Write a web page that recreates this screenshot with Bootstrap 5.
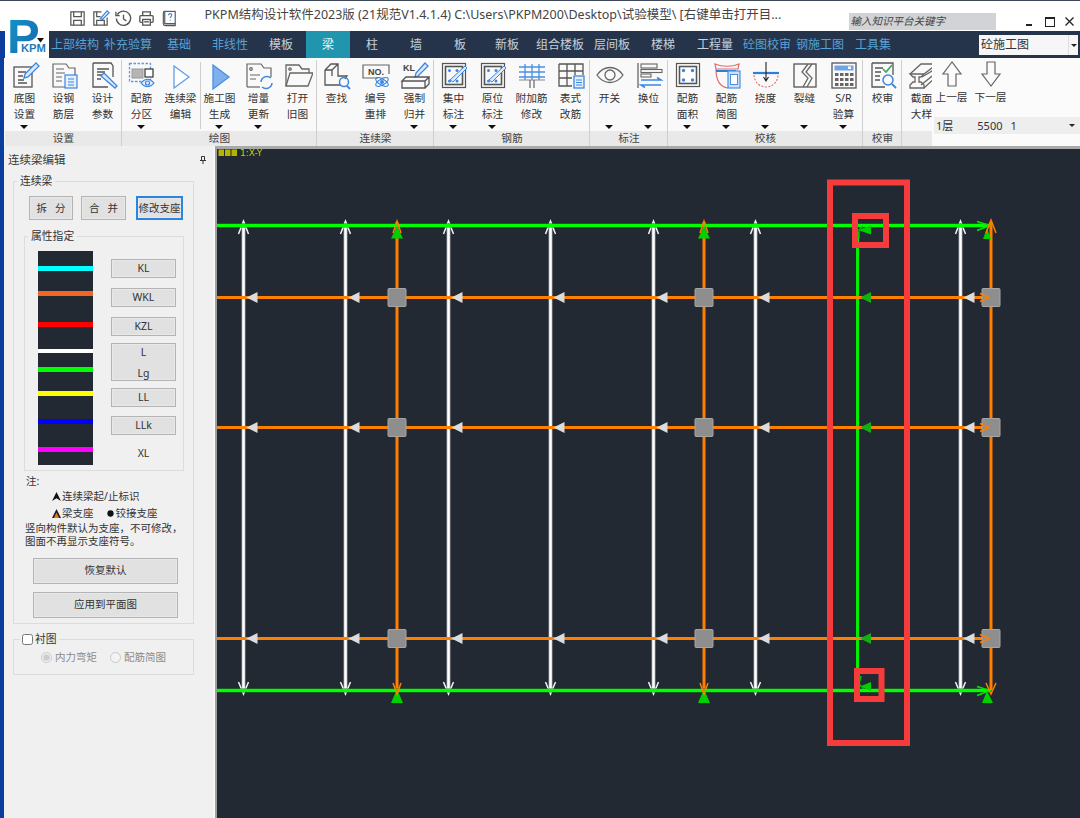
<!DOCTYPE html>
<html lang="zh-CN">
<head>
  <meta charset="UTF-8">
  <title>PKPM结构设计软件2023版</title>
  <link href="https://cdn.jsdelivr.net/npm/bootstrap@5.3.3/dist/css/bootstrap.min.css" rel="stylesheet">
  <style>
    html, body { margin: 0; height: 818px; overflow: hidden; }
    body { background: #fff; color: #333; font-family: "Noto Sans", "Noto Sans CJK SC", sans-serif; font-size: 10.5px; line-height: 15px; }
    .app { width: 1080px; height: 818px; background: linear-gradient(#fff 14px, #0b3d9e 14px); }
    .main { width: 1076px; margin-left: 4px; height: 818px; }

    .titlebar { height: 31px; background: #fff; border-top: 1px solid #3b4657; margin-left: -4px; padding-left: 4px; }
    .qat { margin-left: 64px; width: 137px; gap: 4px; }
    .qat svg { width: 19px; height: 19px; }
    .doc-title { width: 590px; font-size: 12.5px; color: #444; white-space: nowrap; padding-bottom: 3px; }
    .search-box { width: 148px; height: 17px; margin-left: 56px; margin-top: 12px; background: #d2d3d6; color: #444; font-style: italic; font-size: 10.5px; line-height: 17px; padding-left: 2px; }
    .win-btns { margin-left: 24px; margin-top: 12px; }
    .win-btns svg { width: 20px; height: 20px; }
    .logo { position: absolute; left: 5px; top: 14px; width: 44px; height: 44px; background: #fff; }
    .logo svg { display: block; width: 44px; height: 44px; }

    .tabs { height: 27px; background: #25344a; margin-left: 44px; }
    .tab { text-align: center; font-size: 12px; line-height: 27px; color: #c6d0da; white-space: nowrap; }
    .tab.blue { color: #57a2d6; }
    .tab.active { background: #2295ae; color: #e9f6f8; }
    .t44 { width: 44px; } .t48 { width: 48px; } .t50 { width: 50px; } .t52 { width: 52px; } .t54 { width: 54px; } .t56 { width: 56px; }
    .view-select { width: 99px; height: 20px; margin-left: 79px; margin-top: 4px; background: #f6f6f6; color: #333; font-size: 12px; line-height: 20px; padding-left: 2px; }
    .view-select i { width: 10px; border-left: 1px solid #ddd; }

    .ribbon { height: 88px; background: #f9f9f9; }
    .rgroups { width: 928px; padding-left: 1px; overflow: hidden; }
    .rgroup { flex: none; position: relative; }
    .rgroup::after { content: ""; position: absolute; right: 0; top: 2px; bottom: 0; width: 1px; background: #cfcfcf; }
    .rgroup.last::after { display: none; }
    .ritem { flex: none; width: 39px; height: 73px; text-align: center; padding-top: 2px; font-size: 10.7px; line-height: 15.5px; color: #333; white-space: nowrap; position: relative; }
    .ritem svg { display: block; width: 30px; height: 30px; margin: 0 auto 1px; }
    .caret-down { width: 0; height: 0; border-left: 4px solid transparent; border-right: 4px solid transparent; border-top: 4px solid #111; position: absolute; left: 15px; top: 67px; }
    .sep { border-left: 1px solid #cfcfcf; height: 67px; margin-right: -1px; }
    .rlabel { height: 15px; background: #e9e9e9; text-align: center; font-size: 10.7px; line-height: 14px; color: #444; }
    .floor-panel { width: 148px; background: #fbfbfb; }
    .floor-btn { width: 39px; text-align: center; font-size: 10.7px; line-height: 15px; color: #333; }
    .floor-btn svg { display: block; width: 30px; height: 30px; margin: 1px auto 1px; }
    .floor-row { height: 17px; margin-top: 12px; margin-left: 2px; background: #eeeeee; font-size: 11px; line-height: 17px; color: #333; padding: 0 5px 0 2px; }
    .mini-caret { width: 0; height: 0; border-left: 3px solid transparent; border-right: 3px solid transparent; border-top: 3px solid #222; }

    .work { height: 672px; }
    .side { width: 211px; background: #f0f0f0; border-right: 2px solid #f7f7f7; flex: none; }
    .side-title { height: 27px; padding: 0 7px 0 4px; font-size: 11.5px; line-height: 15px; color: #3a3a3a; }
    fieldset.grp { border: 1px solid #dcdcdc; padding: 0; margin: 0; min-width: 0; }
    fieldset.grp > legend { float: none; width: auto; padding: 0 3px; font-size: 10.8px; line-height: 16px; color: #333; margin-bottom: 0; }
    .grp-main { width: 181px; margin-left: 9px !important; height: 451px; padding: 7px 0 0 15px !important; }
    fieldset.grp-main > legend { margin-left: -12px; }
    .grp-attr { width: 160px; margin: 8px 0 0 -5px !important; height: 243px; padding: 7px 0 0 13px !important; }
    fieldset.grp-attr > legend { margin-left: -10px; }
    .wbtn { display: block; padding: 0; border-radius: 0; background: #e1e1e1; border: 1px solid #b4b4b4; color: #333; font-size: 10.5px; line-height: 15px; text-align: center; box-shadow: inset 0 0 0 1px #e8e8e8; }
    .wbtn:hover { background: #e1e1e1; color: #333; border-color: #b4b4b4; }
    .w44 { width: 44px; height: 24px; } .w45 { width: 45px; height: 24px; }
    .w47 { width: 47px; height: 24px; margin-left: 10px; border: 2px solid #2a86dc; }
    .wide { width: 145px; height: 26px; margin-left: 4px; }
    .wide.first { margin-top: 10px; }
    .swatch { display: block; width: 55px; height: 214px; }
    .attr-col { width: 65px; margin-left: 18px; padding-top: 8px; }
    .attr-col .wbtn { width: 65px; height: 19px; margin-bottom: 10px; }
    .attr-col .tall { height: 38px; margin-top: -3px; margin-bottom: 7px; padding: 0; line-height: 22px; }
    .attr-col .tall span { display: block; height: 17px; line-height: 17px; }
    .attr-col .tall span + span { margin-top: 4px; }
    .attr-col .ll { margin-bottom: 9px; }
    .attr-col .xl { text-align: center; line-height: 16px; margin-top: 2px; }
    .notes { margin-left: -3px; margin-top: 2px; line-height: 16px; color: #333; }
    .notes .leg { height: 16px; padding-left: 26px; }
    .notes .leg.up { margin-top: -1px; margin-bottom: 1px; }
    .notes .leg svg { width: 9px; height: 9px; margin-right: 1px; }
    .notes .leg svg.dot { margin-left: 12px; }
    .notes p { margin: 1px 0 0 -1px; line-height: 12.8px; }
    .grp-bg { width: 181px; margin: 7px 0 0 9px !important; height: 44px; padding: 3px 0 0 27px !important; color: #8c8c8c; }
    fieldset.grp-bg > legend { margin-left: -21px; padding: 0 2px; }
    .grp-bg input { margin: 0; width: 11px; height: 11px; accent-color: #8c8c8c; }
    .grp-bg .r1 { margin: 0 13px 0 3px; }
    .grp-bg .r2 { margin-left: 3px; }
    .grp-bg legend input { vertical-align: -2px; margin-right: 2px; accent-color: #fff; }

    .canvas { width: 865px; background: #222932; border-top: 3px solid #a9a9a9; border-left: 2px solid #a0a0a0; flex: none; }
    .canvas svg { display: block; width: 863px; height: 669px; }
    .canvas text { font-family: "DejaVu Sans", "Noto Sans CJK SC", sans-serif; font-size: 9px; fill: #c9c900; }
  </style>
</head>
<body>
<svg width="0" height="0" class="position-absolute">
  <defs>
    <linearGradient id="logoGrad" x1="0" y1="0" x2="1" y2="1"><stop offset="0" stop-color="#0f9ac4"/><stop offset="1" stop-color="#1c62b0"/></linearGradient>
  </defs>
  <symbol id="pen" viewBox="0 0 30 30"><path d="M13 19l1-4L25 4l3 3L17 18z" fill="#dce9fa" stroke="#3b86e0" stroke-width="1.3"/></symbol>
  <symbol id="bars" viewBox="0 0 30 30"><rect x="3.500" y="3.500" width="23" height="23" fill="#fff" stroke="#555" stroke-width="1.200"/><rect x="6.500" y="6.500" width="17" height="17" fill="none" stroke="#555" stroke-width="1.600"/><circle cx="10.500" cy="10.500" r="1.700" fill="#3b86e0"/><circle cx="19.500" cy="10.500" r="1.700" fill="#3b86e0"/><circle cx="10.500" cy="20" r="1.700" fill="#3b86e0"/><circle cx="19.500" cy="20" r="1.700" fill="#3b86e0"/></symbol>
</svg>
<div class="app position-relative">
  <div class="main">
    <div class="titlebar d-flex align-items-start">
      <div class="qat d-flex align-items-center mt-1 pt-1">
        <svg viewBox="0 0 20 20" fill="none" stroke="#555" stroke-width="1.3"><rect x="3" y="3" width="14" height="14"/><path d="M6 3v5h8V3M6 17v-5h8v5"/></svg>
        <svg viewBox="0 0 20 20" fill="none" stroke="#555" stroke-width="1.3"><path d="M11 3H3v14h14V9"/><path d="M6 3v5h4M6 17v-5h8v5"/><path d="M10 10l7-8 2 2-7 7z" stroke="#3b86e0"/></svg>
        <svg viewBox="0 0 20 20" fill="none" stroke="#555" stroke-width="1.4"><path d="M3.500 6A7.500 7.500 0 1 1 2.500 10"/><path d="M2 3v4h4M10 6v4.500l3 2"/></svg>
        <svg viewBox="0 0 20 20" fill="none" stroke="#555" stroke-width="1.4"><path d="M6 7V3h8v4"/><rect x="3" y="7" width="14" height="7" rx="1"/><rect x="6" y="11" width="8" height="6" fill="#fff"/><path d="M7.500 13.500h5"/></svg>
        <svg viewBox="0 0 20 20" fill="none" stroke="#555" stroke-width="1.2"><rect x="5" y="2.500" width="11" height="13"/><path d="M5 2.500c-1 0-1.500 1-1.500 2v11c0 1.500 1 2 2 2H16v-2H5.500"/><path d="M9 6.500c0-2.200 3.300-2.200 3.300 0 0 1.500-1.600 1.500-1.600 3M10.700 11v1" stroke="#3b86e0"/></svg>
      </div>
      <div class="doc-title align-self-center">PKPM结构设计软件2023版 (21规范V1.4.1.4) C:\Users\PKPM200\Desktop\试验模型\ [右键单击打开目...</div>
      <div class="search-box">输入知识平台关键字</div>
      <div class="win-btns d-flex">
        <svg viewBox="0 0 20 20"><rect x="6" y="11" width="6" height="2" fill="#222"/></svg>
        <svg viewBox="0 0 20 20" fill="none" stroke="#222"><rect x="5.500" y="4.500" width="9" height="9" stroke-width="1"/><path d="M5 5h10" stroke-width="2"/></svg>
        <svg viewBox="0 0 20 20" fill="none" stroke="#222" stroke-width="1.300"><path d="M5.500 4.500l8 8M13.500 4.500l-8 8"/></svg>
      </div>
    </div>

    <div class="tabs d-flex">
      <div class="tab blue t54">上部结构</div>
      <div class="tab blue t52">补充验算</div>
      <div class="tab blue t50">基础</div>
      <div class="tab blue t52">非线性</div>
      <div class="tab t50">模板</div>
      <div class="tab active t44">梁</div>
      <div class="tab t44">柱</div>
      <div class="tab t44">墙</div>
      <div class="tab t44">板</div>
      <div class="tab t50">新板</div>
      <div class="tab t56">组合楼板</div>
      <div class="tab t48">层间板</div>
      <div class="tab t54">楼梯</div>
      <div class="tab t50">工程量</div>
      <div class="tab blue t54">砼图校审</div>
      <div class="tab blue t52">钢施工图</div>
      <div class="tab blue t54">工具集</div>
      <div class="view-select d-flex justify-content-between">砼施工图<i class="d-flex align-items-center justify-content-center"><span class="mini-caret"></span></i></div>
    </div>

    <div class="ribbon d-flex">
      <div class="rgroups d-flex">
        <div class="rgroup">
          <div class="d-flex">
            <div class="ritem"><svg viewBox="0 0 30 30" fill="none" stroke="#555" stroke-width="1.3"><rect x="4" y="7" width="18" height="20"/><path d="M8 12h8M8 16h5M8 20h6M8 23h9"/><use href="#pen" x="1" y="-1" width="30" height="30"/></svg>底图<br>设置<span class="caret-down"></span></div>
            <div class="ritem"><svg viewBox="0 0 30 30" fill="none" stroke="#666" stroke-width="1.200"><path d="M4 4h13l3 4h6v19H4z"/><path d="M7 9h8M7 13h9M7 17h6M7 21h6"/><rect x="16" y="15" width="12" height="13" fill="#e6f0fb" stroke="#3b86e0"/><path d="M19 19h6M19 22h6M19 25h6" stroke="#3b86e0"/></svg>设钢<br>筋层</div>
            <div class="ritem"><svg viewBox="0 0 30 30" fill="none" stroke="#555" stroke-width="1.300"><path d="M5 3h18l2 3v11M5 3v24h15"/><path d="M9 9h12M9 12h8M9 15h5M9 19h4"/><path d="M13 16l3-3 13 13-2 2z" fill="#dce9fa" stroke="#3b86e0"/></svg>设计<br>参数</div>
          </div>
          <div class="rlabel">设置</div>
        </div>
        <div class="rgroup">
          <div class="d-flex">
            <div class="ritem"><svg viewBox="0 0 30 30" fill="none"><rect x="2.500" y="3.500" width="21" height="18" stroke="#5a9be6" stroke-width="1.300" stroke-dasharray="2.500 1.500"/><rect x="5" y="9" width="11" height="9" fill="#b5b5b5" stroke="#999"/><rect x="18" y="9" width="8" height="8" fill="#fff" stroke="#333" stroke-width="1.200"/><path d="M14 23c4-5 9-5 13 0-4 5-9 5-13 0z" fill="#e4effb" stroke="#3b86e0" stroke-width="1.200"/><circle cx="20.500" cy="23" r="2" stroke="#3b86e0" stroke-width="1.200"/></svg>配筋<br>分区<span class="caret-down"></span></div>
            <div class="ritem"><svg viewBox="0 0 30 30" fill="none"><path d="M8 6l15 11L8 28z" fill="#fff" stroke="#5f9fe8" stroke-width="1.300"/></svg>连续梁<br>编辑</div>
            <div class="sep mt-1"></div>
            <div class="ritem"><svg viewBox="0 0 30 30"><path d="M8 5l16 12L8 29z" fill="#7fb0ec" stroke="#4a8fe2" stroke-width="1.300"/></svg>施工图<br>生成<span class="caret-down"></span></div>
            <div class="ritem"><svg viewBox="0 0 30 30" fill="none" stroke="#666" stroke-width="1.200"><path d="M3 27V4h14l3 4h7v9"/><path d="M3 27h13"/><circle cx="7" cy="9" r="1.300"/><path d="M6 15h10M6 19h6"/><path d="M17 22a6 6 0 0 1 10-4M28 23a6 6 0 0 1-10 4" stroke="#3b86e0" stroke-width="1.500"/></svg>增量<br>更新<span class="caret-down"></span></div>
            <div class="ritem"><svg viewBox="0 0 30 30" fill="none" stroke="#666" stroke-width="1.300"><path d="M3 26V5h13l3 4h7v4"/><path d="M3 26l4-13h23l-5 13z"/><circle cx="7" cy="9" r="1.200"/></svg>打开<br>旧图</div>
          </div>
          <div class="rlabel">绘图</div>
        </div>
        <div class="rgroup">
          <div class="d-flex">
            <div class="ritem"><svg viewBox="0 0 30 30" fill="none" stroke="#555" stroke-width="1.300"><path d="M3 10l6-6h7v12h9l-2 3M3 10h7v6M3 10v15h16M10 10l6-6"/><circle cx="22" cy="22" r="4.500" stroke="#3b86e0" stroke-width="1.500"/><path d="M25 26l3 3" stroke="#3b86e0" stroke-width="1.800"/></svg>查找</div>
            <div class="ritem"><svg viewBox="0 0 30 30" fill="none" stroke="#666" stroke-width="1.200"><path d="M17 18H2V5h26v9"/><text x="7" y="15" font-family="Liberation Sans" font-weight="700" font-size="9" fill="#444" stroke="none">NO.</text><circle cx="21" cy="22" r="2" fill="#3b86e0" stroke="none"/><ellipse cx="21" cy="22" rx="7" ry="3" stroke="#3b86e0" transform="rotate(30 21 22)"/><ellipse cx="21" cy="22" rx="7" ry="3" stroke="#3b86e0" transform="rotate(-30 21 22)"/></svg>编号<br>重排</div>
            <div class="ritem"><svg viewBox="0 0 30 30" fill="none" stroke="#555" stroke-width="1.300"><text x="3" y="11" font-family="Liberation Sans" font-weight="700" font-size="9" fill="#444" stroke="none">KL</text><path d="M15 17l1-4L25 3l3 3-10 10z" fill="#dce9fa" stroke="#3b86e0"/><path d="M2 21l4-4h23l-4 4zM2 21v7h23v-7M25 28l4-4v-7"/></svg>强制<br>归并<span class="caret-down"></span></div>
          </div>
          <div class="rlabel">连续梁</div>
        </div>
        <div class="rgroup">
          <div class="d-flex">
            <div class="ritem"><svg viewBox="0 0 30 30" fill="none"><rect x="3.500" y="3.500" width="23" height="24" stroke="#555" stroke-width="1.200"/><rect x="6.500" y="6.500" width="17" height="18" stroke="#555" stroke-width="1.600"/><circle cx="10.500" cy="10.500" r="1.500" fill="#3b86e0"/><circle cx="18" cy="10.500" r="1.500" fill="#3b86e0"/><circle cx="10.500" cy="21" r="1.500" fill="#3b86e0"/><circle cx="18" cy="21" r="1.500" fill="#3b86e0"/><path d="M11 20l15-14 2 2-14 14z" fill="#dce9fa" stroke="#3b86e0"/></svg>集中<br>标注<span class="caret-down"></span></div>
            <div class="ritem"><svg viewBox="0 0 30 30" fill="none"><rect x="3.500" y="3.500" width="23" height="24" stroke="#555" stroke-width="1.200"/><rect x="6.500" y="6.500" width="17" height="18" stroke="#555" stroke-width="1.600"/><circle cx="10.500" cy="10.500" r="1.500" fill="#3b86e0"/><circle cx="18" cy="10.500" r="1.500" fill="#3b86e0"/><circle cx="10.500" cy="21" r="1.500" fill="#3b86e0"/><circle cx="18" cy="21" r="1.500" fill="#3b86e0"/><path d="M11 20l15-14 2 2-14 14z" fill="#dce9fa" stroke="#3b86e0"/></svg>原位<br>标注<span class="caret-down"></span></div>
            <div class="ritem"><svg viewBox="0 0 30 30" fill="none"><path d="M2 7h26M2 12h26M2 17h26M8 4v16M15 4v16M22 4v16" stroke="#4a8fe2" stroke-width="1.300"/><path d="M2 20h26" stroke="#888"/><path d="M13 20v8M17 20v8" stroke="#666" stroke-width="1.200"/></svg>附加筋<br>修改</div>
            <div class="ritem"><svg viewBox="0 0 30 30" fill="none" stroke="#555" stroke-width="1.300"><path d="M3 4h24v11M3 4v22h13M3 11h24M3 18h13M11 4v22M19 4v11"/><rect x="18" y="16" width="10" height="12" fill="#e6f0fb" stroke="#3b86e0"/><path d="M20 20h6M20 22.500h6M20 25h6" stroke="#3b86e0" stroke-width="1"/></svg>表式<br>改筋</div>
          </div>
          <div class="rlabel">钢筋</div>
        </div>
        <div class="rgroup">
          <div class="d-flex">
            <div class="ritem"><svg viewBox="0 0 30 30" fill="none" stroke="#666" stroke-width="1.300"><path d="M2 15c7-10 19-10 26 0-7 10-19 10-26 0z"/><circle cx="15" cy="15" r="5"/></svg>开关<span class="caret-down"></span></div>
            <div class="ritem"><svg viewBox="0 0 30 30" fill="none"><path d="M4 3v25" stroke="#666" stroke-width="1.300"/><rect x="7" y="4" width="16" height="4" stroke="#666" stroke-width="1.100"/><rect x="7" y="9.500" width="21" height="3" stroke="#666" stroke-width="1.100"/><rect x="7" y="14" width="10" height="3" stroke="#666" stroke-width="1.100"/><path d="M7 20h20l-4-2.500M27 25H7l4 2.500" stroke="#3b86e0" stroke-width="1.500"/></svg>换位<span class="caret-down"></span></div>
          </div>
          <div class="rlabel">标注</div>
        </div>
        <div class="rgroup">
          <div class="d-flex">
            <div class="ritem"><svg viewBox="0 0 30 30"><use href="#bars" width="30" height="30"/></svg>配筋<br>面积<span class="caret-down"></span></div>
            <div class="ritem"><svg viewBox="0 0 30 30" fill="none"><path d="M3 4c7 3 17 3 24 0l-1 5H4zM4 9c0 12 4 18 12 19" stroke="#e06a6a" stroke-width="1.200"/><path d="M4 11h20" stroke="#2e7cdc" stroke-width="2"/><rect x="16" y="11" width="12" height="17" fill="#cfe0f6" stroke="#4a8fe2" stroke-width="1.200"/><rect x="18.500" y="14.500" width="7" height="10" fill="#fff" stroke="#4a8fe2"/></svg>配筋<br>简图<span class="caret-down"></span></div>
            <div class="ritem"><svg viewBox="0 0 30 30" fill="none"><path d="M2 13h26" stroke="#2e7cdc" stroke-width="2.200"/><path d="M3 15c1 16 23 16 24 0" stroke="#e06a6a" stroke-width="1.100" stroke-dasharray="2 1.500"/><path d="M15 2v18M12.500 17l2.500 4 2.500-4" stroke="#222" stroke-width="1.100"/></svg>挠度<span class="caret-down"></span></div>
            <div class="ritem"><svg viewBox="0 0 30 30" fill="none" stroke="#555" stroke-width="1.300"><rect x="4" y="4" width="22" height="23"/><path d="M18 4l-6 8 6 6-5 9M22 4l-6 8 6 6-5 9" stroke="#666"/></svg>裂缝<span class="caret-down"></span></div>
            <div class="ritem"><svg viewBox="0 0 30 30" fill="none"><rect x="3" y="3" width="24" height="25" stroke="#555" stroke-width="1.300"/><rect x="5.500" y="5.500" width="19" height="5" fill="#6ea4e8"/><rect x="19" y="6.500" width="3" height="2.500" fill="#fff"/><g fill="#666"><rect x="6" y="13" width="3.500" height="3"/><rect x="11" y="13" width="3.500" height="3"/><rect x="16" y="13" width="3.500" height="3"/><rect x="21" y="13" width="3.500" height="3"/><rect x="6" y="18" width="3.500" height="3"/><rect x="11" y="18" width="3.500" height="3"/><rect x="16" y="18" width="3.500" height="3"/><rect x="21" y="18" width="3.500" height="3"/><rect x="6" y="23" width="3.500" height="3"/><rect x="11" y="23" width="3.500" height="3"/><rect x="16" y="23" width="3.500" height="3"/><rect x="21" y="23" width="3.500" height="3"/></g></svg>S/R<br>验算<span class="caret-down"></span></div>
          </div>
          <div class="rlabel">校核</div>
        </div>
        <div class="rgroup">
          <div class="d-flex">
            <div class="ritem"><svg viewBox="0 0 30 30" fill="none" stroke="#555" stroke-width="1.300"><path d="M4 3h21v12M4 3v24h13"/><path d="M7 8h8M7 12h6M7 16h5M7 20h5"/><path d="M15 9l3 3 6-7" stroke="#3aa655" stroke-width="1.600"/><circle cx="20" cy="20" r="5" stroke="#3b86e0" stroke-width="1.500"/><path d="M24 24l4 4" stroke="#3b86e0" stroke-width="1.800"/></svg>校审</div>
          </div>
          <div class="rlabel">校审</div>
        </div>
        <div class="rgroup last">
          <div class="d-flex">
            <div class="ritem"><svg viewBox="0 0 30 30" fill="none" stroke="#666" stroke-width="1.300"><path d="M3 14h14l-3 3h-2v5h2l3 3v3H3v-3l3-3h2v-5H6l-3-3z"/><path d="M3 14l11-10h16M17 14L30 4M15 17L30 8M17 28L30 16M14 25L30 12"/></svg>截面<br>大样</div>
          </div>
          <div class="rlabel"></div>
        </div>
      </div>
      <div class="floor-panel">
        <div class="d-flex">
          <div class="floor-btn"><svg viewBox="0 0 30 30" fill="none" stroke="#666" stroke-width="1.200"><path d="M15 3L6 15h5v12h8V15h5z"/></svg>上一层</div>
          <div class="floor-btn"><svg viewBox="0 0 30 30" fill="none" stroke="#666" stroke-width="1.200"><path d="M15 27L6 15h5V3h8v12h5z"/></svg>下一层</div>
        </div>
        <div class="floor-row d-flex align-items-center"><span class="me-4">1层</span><span class="me-2">5500</span><span class="flex-grow-1">1</span><span class="mini-caret"></span></div>
      </div>
    </div>

    <div class="work d-flex">
      <div class="side">
        <div class="side-title d-flex justify-content-between align-items-center">连续梁编辑
          <svg width="6" height="8" viewBox="0 0 6 8" fill="none" stroke="#333"><path d="M1.500 .5v4h3v-4zM0 4.500h6M3 4.500V8"/></svg>
        </div>
        <fieldset class="grp grp-main">
          <legend>连续梁</legend>
          <div class="d-flex">
            <button class="btn wbtn w44 me-2" type="button">拆&nbsp;&nbsp;&nbsp;分</button>
            <button class="btn wbtn w45" type="button">合&nbsp;&nbsp;&nbsp;并</button>
            <button class="btn wbtn w47" type="button">修改支座</button>
          </div>
          <fieldset class="grp grp-attr">
            <legend>属性指定</legend>
            <div class="d-flex">
              <svg class="swatch" viewBox="0 0 55 214">
                <rect width="55" height="214" fill="#222932"/>
                <rect y="15" width="55" height="5" fill="#00ffff"/>
                <rect y="40" width="55" height="5" fill="#f26522"/>
                <rect y="71" width="55" height="5" fill="#ff0000"/>
                <rect y="98" width="55" height="4" fill="#ffffff"/>
                <rect y="116" width="55" height="5" fill="#00ff00"/>
                <rect y="140" width="55" height="5" fill="#ffff00"/>
                <rect y="168" width="55" height="5" fill="#0000ff"/>
                <rect y="196" width="55" height="5" fill="#ff00ff"/>
              </svg>
              <div class="attr-col">
                <button class="btn wbtn" type="button">KL</button>
                <button class="btn wbtn" type="button">WKL</button>
                <button class="btn wbtn" type="button">KZL</button>
                <button class="btn wbtn tall" type="button"><span>L</span><span>Lg</span></button>
                <button class="btn wbtn ll" type="button">LL</button>
                <button class="btn wbtn" type="button">LLk</button>
                <div class="xl">XL</div>
              </div>
            </div>
          </fieldset>
          <div class="notes">
            <div>注:</div>
            <div class="leg up d-flex align-items-center"><svg viewBox="0 0 10 10"><path d="M5 0l5 10-5-3-5 3z" fill="#111"/></svg>连续梁起/止标识</div>
            <div class="leg d-flex align-items-center"><svg viewBox="0 0 10 10"><path d="M5 0l5 10H0z" fill="#1a1a2a"/><path d="M2 10h6L5 4z" fill="#e07a10"/></svg>梁支座<svg class="dot" viewBox="0 0 10 10"><circle cx="5" cy="5" r="3.500" fill="#111"/></svg>铰接支座</div>
            <p>竖向构件默认为支座，不可修改，<br>图面不再显示支座符号。</p>
          </div>
          <button class="btn wbtn wide first" type="button">恢复默认</button>
          <button class="btn wbtn wide mt-2" type="button">应用到平面图</button>
        </fieldset>
        <fieldset class="grp grp-bg">
          <legend><input type="checkbox" aria-label="衬图">衬图</legend>
          <div class="d-flex align-items-center">
            <input type="radio" name="bg" checked disabled aria-label="内力弯矩"><span class="r1">内力弯矩</span>
            <input type="radio" name="bg" disabled aria-label="配筋简图"><span class="r2">配筋简图</span>
          </div>
        </fieldset>
      </div>
      <div class="canvas"><svg id="plan" viewBox="217 149 863 669"></svg></div>
    </div>
  </div>
  <div class="logo">
    <svg viewBox="0 0 44 44">
      <text x="2" y="39" font-family="Liberation Sans" font-weight="700" font-size="49" fill="url(#logoGrad)">P</text>
      <text x="16" y="38" font-family="Liberation Sans" font-weight="700" font-size="10" fill="#1f7ab8" textLength="25" lengthAdjust="spacingAndGlyphs">KPM</text>
      <path d="M32 24h7l-3.500 4.500z" fill="#111"/>
    </svg>
  </div>
</div>
<script>
  const plan = document.getElementById('plan');
  let out = '';
  const line = (x1, y1, x2, y2, color, w) => { out += `<line x1="${x1}" y1="${y1}" x2="${x2}" y2="${y2}" stroke="${color}" stroke-width="${w}"/>`; };
  const poly = (pts, fill) => { out += `<polygon points="${pts}" fill="${fill}"/>`; };
  const open = (pts, color) => { out += `<polyline points="${pts}" fill="none" stroke="${color}" stroke-width="1.500"/>`; };

  const whites = [243.5, 345.5, 448.5, 550.5, 653.5, 755.5, 960.5];
  const orangeV = [397, 704];
  const rows = [297.5, 427.5, 638.5];

  // plan title
  [218.5, 225, 231.5].forEach(x => { out += `<rect x="${x}" y="149.500" width="5.500" height="6.500" fill="#b5b500"/>`; });
  out += `<text x="240" y="156">1:X-Y</text>`;

  // secondary beams, white
  whites.forEach(x => {
    line(x, 226, x, 690, '#8f9499', 4);
    line(x, 226, x, 690, '#ffffff', 2.500);
    open(`${x - 5},234 ${x},221 ${x + 5},234`, '#f2f2f2');
    open(`${x - 5},682 ${x},694 ${x + 5},682`, '#f2f2f2');
  });

  // main beams
  orangeV.concat([991]).forEach(x => line(x, 222, x, 690, '#ff7f00', 3));
  line(857.5, 232, 857.5, 682, '#00f000', 3);
  rows.forEach(y => line(217, y, 990, y, '#ff7f00', 3));
  [225.5, 690.5].forEach(y => {
    line(217, y, 990, y, '#0f8a0f', 4);
    line(217, y, 990, y, '#00ff00', 3);
    open(`977,${y - 4} 990,${y} 977,${y + 5}`, '#00e600');
  });

  // columns
  orangeV.concat([991]).forEach(x => rows.forEach(y => {
    out += `<rect x="${x - 9}" y="${y - 9}" width="18" height="18" rx="1" fill="#8e8e8e" stroke="#a5a5a5"/>`;
  }));

  // supports on the horizontal beams
  rows.forEach(y => {
    whites.forEach(x => {
      const t = x + 3;
      poly(`${t},${y} ${t + 11},${y - 5.500} ${t + 11},${y + 5.500}`, '#dcdcdc');
    });
    poly(`860,${y} 871,${y - 5.500} 871,${y + 5.500}`, '#12b012');
    open(`980,${y - 4} 989,${y} 980,${y + 4}`, '#ff7f00');
  });

  // supports at the beam ends
  orangeV.forEach(x => {
    poly(`${x},226 ${x + 6},238.500 ${x - 6},238.500`, '#00d000');
    poly(`${x},689 ${x + 6},703 ${x - 6},703`, '#00d000');
    open(`${x - 4},233 ${x},221 ${x + 4},233`, '#ff7f00');
    open(`${x - 4},683 ${x},694 ${x + 4},683`, '#ff7f00');
  });
  poly('987,228 991,239 983,239', '#00d000');
  poly('987,691 993,703 982,703', '#00d000');
  open('986,233 991,220 996,233', '#ff7f00');
  open('986,683 991,694 996,683', '#ff7f00');

  // beam being edited
  poly('858,230 871,225.500 871,234.500', '#00d000');
  open('863,226 859,230 859,238', '#00c000');
  poly('860,686.500 871,682 871,691', '#00d000');
  open('861,676 859,684 864,689', '#00c000');

  // hand-drawn markup on the screenshot
  out += `<g fill="none" stroke="#f53b3b" stroke-width="6">
    <rect x="830" y="182.500" width="77" height="560.500"/>
    <rect x="855" y="216" width="31" height="29"/>
    <rect x="857" y="671" width="24.500" height="28"/>
  </g>`;

  plan.innerHTML = out;
</script>
</body>
</html>
